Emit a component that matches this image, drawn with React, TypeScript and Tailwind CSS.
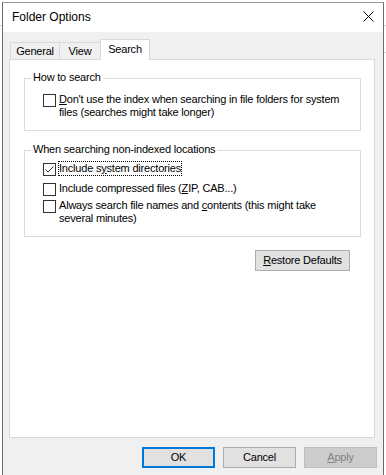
import type { ReactNode } from "react";

function CheckBox({ checked = false }: { checked?: boolean }) {
  return (
    <span className="mt-px flex size-[13px] shrink-0 items-center justify-center border border-[#333333] bg-white">
      {checked && (
        <svg width="11" height="11" viewBox="0 0 11 11" fill="none">
          <polyline
            points="1.5,5.5 4,8 9.5,2.5"
            stroke="#333333"
            strokeWidth="1"
          />
        </svg>
      )}
    </span>
  );
}

function Group({
  title,
  className = "",
  children,
}: {
  title: string;
  className?: string;
  children: ReactNode;
}) {
  return (
    <div className={`relative ml-[14px] w-[337px] border border-[#dcdcdc] ${className}`}>
      <span className="absolute left-[6px] top-[-8px] bg-white px-[2px] leading-[13px]">
        {title}
      </span>
      {children}
    </div>
  );
}

function Tab({ label, active, className = "" }: { label: string; active?: boolean; className?: string }) {
  if (active) {
    return (
      <div
        className={`relative z-10 -mb-px flex h-[21px] items-start justify-center border border-b-0 border-[#d9d9d9] bg-white pt-[3px] ${className}`}
      >
        {label}
      </div>
    );
  }
  return (
    <div
      className={`flex h-[17px] items-start justify-center border-t border-[#d9d9d9] bg-[#f0f0f0] pt-[2px] ${className}`}
    >
      {label}
    </div>
  );
}

function Button({
  children,
  className = "",
}: {
  children: ReactNode;
  className?: string;
}) {
  return (
    <div
      className={`flex h-[21px] items-center justify-center border ${className}`}
    >
      {children}
    </div>
  );
}

export default function App() {
  return (
    <div className="relative h-[475px] w-[386px] overflow-hidden bg-white font-['Liberation_Sans',Arial,sans-serif] text-[11px] leading-[13px] tracking-[-0.2px] text-black">
      {/* window edges of what lies behind */}
      <div className="absolute left-0 top-[25px] h-px w-[2px] bg-[#d4d4d4]" />
      <div className="absolute right-0 top-[25px] h-px w-[2px] bg-[#d4d4d4]" />
      <div className="absolute right-0 top-[52px] h-px w-[2px] bg-[#d4d4d4]" />

      <div className="ml-[2px] mt-[2px] flex h-[473px] w-[382px] flex-col border-x border-t border-x-[#6b6b6b] border-t-[#9a9a9a]">
        <div className="flex h-[29px] shrink-0 items-center justify-between bg-white pl-[9px] pr-[9px]">
          <span className="text-[12px] tracking-normal">Folder Options</span>
          <svg width="11" height="11" viewBox="0 0 11 11" className="mb-[2px]">
            <path d="M0.5 0.5 L10.5 10.5 M10.5 0.5 L0.5 10.5" stroke="#000" strokeWidth="1" />
          </svg>
        </div>

        <div className="flex flex-1 flex-col bg-[#f0f0f0] px-[6px] pt-[7px]">
          <div className="ml-px flex h-[20px] items-end">
            <Tab label="General" className="w-[50px] border-x" />
            <Tab label="View" className="w-[41px] border-r" />
            <Tab label="Search" active className="-ml-px w-[50px]" />
          </div>

          <div className="flex h-[379px] w-[366px] flex-col border border-[#d9d9d9] bg-white">
            <Group title="How to search" className="mt-[18px] pb-[11px] pl-[18px] pt-[14px]">
              <div className="flex items-start gap-[3px]">
                <CheckBox />
                <span className="w-[286px]">
                  <span className="underline">D</span>on&apos;t use the index when searching in file folders for system
                  files (searches might take longer)
                </span>
              </div>
            </Group>

            <Group
              title="When searching non-indexed locations"
              className="mt-[19px] pb-[11px] pl-[18px] pt-[11px]"
            >
              <div className="mb-[6px] flex items-start gap-[3px]">
                <CheckBox checked />
                <span className="outline-1 outline-dotted outline-black">
                  Include s<span className="underline">y</span>stem directories
                </span>
              </div>
              <div className="mb-[3px] flex items-start gap-[3px]">
                <CheckBox />
                <span>
                  Include compressed files (<span className="underline">Z</span>IP, CAB...)
                </span>
              </div>
              <div className="flex items-start gap-[3px]">
                <CheckBox />
                <span className="w-[286px]">
                  Always search file names and <span className="underline">c</span>ontents (this might take
                  several minutes)
                </span>
              </div>
            </Group>

            <Button className="mr-[24px] mt-[13px] w-[95px] self-end border-[#adadad] bg-[#e1e1e1]">
              <span>
                <span className="underline">R</span>estore Defaults
              </span>
            </Button>
          </div>

          <div className="mt-[9px] flex justify-end gap-[8px]">
            <Button className="w-[73px] border-2 border-[#0078d7] bg-[#e1e1e1]">OK</Button>
            <Button className="w-[73px] border-[#adadad] bg-[#e1e1e1]">Cancel</Button>
            <Button className="w-[73px] border-[#bfbfbf] bg-[#cccccc] text-[#838383]">
              <span>
                <span className="underline">A</span>pply
              </span>
            </Button>
          </div>
        </div>
      </div>
    </div>
  );
}
